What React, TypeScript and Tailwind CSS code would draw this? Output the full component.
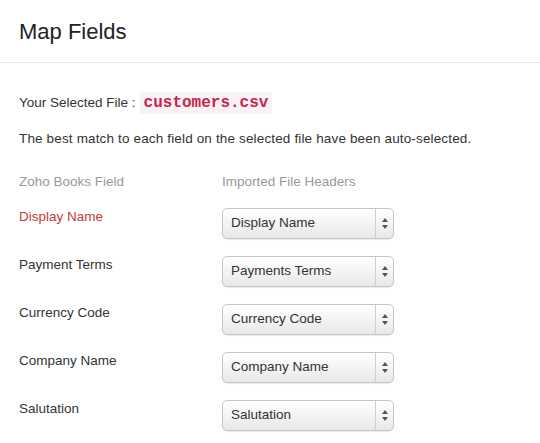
const rows = [
    { label: 'Display Name', value: 'Display Name', required: true },
    { label: 'Payment Terms', value: 'Payments Terms' },
    { label: 'Currency Code', value: 'Currency Code' },
    { label: 'Company Name', value: 'Company Name' },
    { label: 'Salutation', value: 'Salutation' },
];

const SelectBox = ({ value }: { value: string }) => (
    <div className="flex h-[31px] w-[172px] items-stretch rounded-[5px] border border-[#c6c6c6] bg-gradient-to-b from-white to-[#e8e8e8] shadow-[0_1px_1px_rgba(0,0,0,0.08)]">
        <div className="flex flex-1 items-center pl-[8px] text-[13.5px] text-[#333]">{value}</div>
        <div className="flex w-[18px] items-center justify-center border-l border-[#cfcfcf]">
            <svg width="6" height="11" viewBox="0 0 6 11">
                <path d="M3 0 L6 4 L0 4 Z" fill="#555" />
                <path d="M0 7 L6 7 L3 11 Z" fill="#555" />
            </svg>
        </div>
    </div>
);

export default function App() {
    return (
        <div className="h-[443px] w-[540px] bg-white font-['Liberation_Sans',Arial,sans-serif] text-[#333]">
            <div className="flex h-[63px] items-center border-b border-[#e6e6e6] px-[19px]">
                <h1 className="text-[22px] text-[#222]">Map Fields</h1>
            </div>
            <div className="px-[19px] pt-[29px]">
                <div className="flex items-center text-[13.5px]">
                    <span>Your Selected File :</span>
                    <code className="ml-[4px] rounded-[3px] bg-[#f9f2f4] px-[4px] py-[1px] font-['Liberation_Mono',monospace] text-[16px] font-bold leading-[20px] text-[#c7254e]">
                        customers.csv
                    </code>
                </div>
                <p className="mt-[16px] text-[13.5px] leading-[18px] tracking-[0.15px]">
                    The best match to each field on the selected file have been auto-selected.
                </p>
                <div className="mt-[25px] flex text-[13.5px] leading-[18px] text-[#999]">
                    <div className="w-[203px]">Zoho Books Field</div>
                    <div>Imported File Headers</div>
                </div>
                <div className="mt-[17px] flex flex-col gap-[17px]">
                    {rows.map((r) => (
                        <div key={r.label} className="flex items-start">
                            <div className={`w-[203px] text-[13.5px] leading-[18px] ${r.required ? 'text-[#c23a3a]' : 'text-[#333]'}`}>
                                {r.label}
                            </div>
                            <SelectBox value={r.value} />
                        </div>
                    ))}
                </div>
            </div>
        </div>
    );
}
